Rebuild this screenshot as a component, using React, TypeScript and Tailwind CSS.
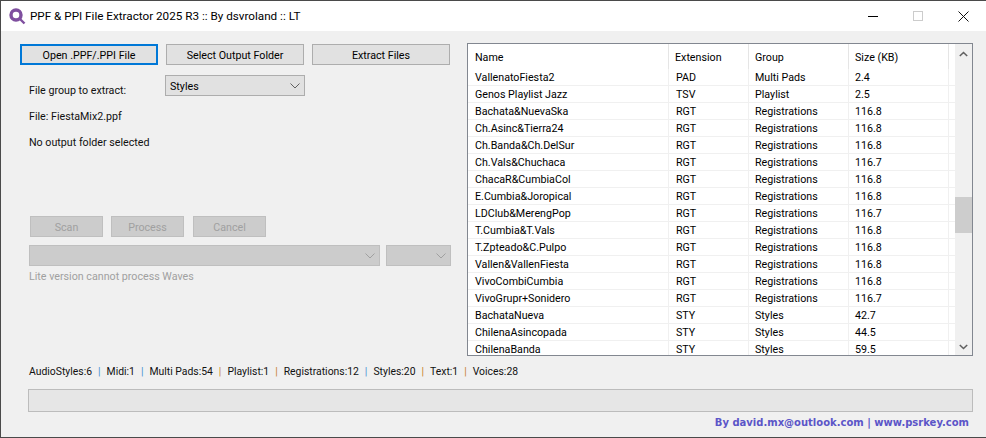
import React from "react";

const rows: [string, string, string, string][] = [
  ["VallenatoFiesta2", "PAD", "Multi Pads", "2.4"],
  ["Genos Playlist Jazz", "TSV", "Playlist", "2.5"],
  ["Bachata&NuevaSka", "RGT", "Registrations", "116.8"],
  ["Ch.Asinc&Tierra24", "RGT", "Registrations", "116.8"],
  ["Ch.Banda&Ch.DelSur", "RGT", "Registrations", "116.8"],
  ["Ch.Vals&Chuchaca", "RGT", "Registrations", "116.7"],
  ["ChacaR&CumbiaCol", "RGT", "Registrations", "116.8"],
  ["E.Cumbia&Joropical", "RGT", "Registrations", "116.8"],
  ["LDClub&MerengPop", "RGT", "Registrations", "116.7"],
  ["T.Cumbia&T.Vals", "RGT", "Registrations", "116.8"],
  ["T.Zpteado&C.Pulpo", "RGT", "Registrations", "116.8"],
  ["Vallen&VallenFiesta", "RGT", "Registrations", "116.8"],
  ["VivoCombiCumbia", "RGT", "Registrations", "116.8"],
  ["VivoGrupr+Sonidero", "RGT", "Registrations", "116.7"],
  ["BachataNueva", "STY", "Styles", "42.7"],
  ["ChilenaAsincopada", "STY", "Styles", "44.5"],
  ["ChilenaBanda", "STY", "Styles", "59.5"],
];

const status = ["AudioStyles:6", "Midi:1", "Multi Pads:54", "Playlist:1", "Registrations:12", "Styles:20", "Text:1", "Voices:28"];
const blueBars = [1, 2, 5];

function Chevron({ color = "#606060" }: { color?: string }) {
  return (
    <svg width="10" height="6" viewBox="0 0 10 6" fill="none" stroke={color} strokeWidth="1">
      <path d="M0.5 0.5 L5 5 L9.5 0.5" />
    </svg>
  );
}

function Btn({ children }: { children: React.ReactNode }) {
  return (
    <div className="w-[138px] h-[21px] pt-[2px] flex items-center justify-center bg-[#e1e1e1] border border-[#adadad] text-black">
      {children}
    </div>
  );
}

function DisabledBtn({ children }: { children: React.ReactNode }) {
  return (
    <div className="w-[73px] h-[21px] pt-[2px] flex items-center justify-center bg-[#cccccc] border border-[#bfbfbf] text-[#a0a0a0]">
      {children}
    </div>
  );
}

export default function App() {
  return (
    <div className="w-[986px] h-[438px] flex flex-col overflow-hidden bg-[#f0f0f0] border-t border-l border-b border-[#4a4a4a] text-[10.7px] leading-[16px] text-[#111] font-['Roboto','Noto_Sans',sans-serif]">
      {/* title bar */}
      <div className="h-[30px] shrink-0 bg-white flex items-center">
        <svg className="ml-[8px] mt-[1px] shrink-0" width="17" height="17" viewBox="0 0 17 17" fill="none">
          <circle cx="7" cy="7" r="5" stroke="#7f4f9f" strokeWidth="3.4" />
          <path d="M10 10 L15.5 15.5" stroke="#7f4f9f" strokeWidth="2.4" />
        </svg>
        <span className="ml-[4px] text-black text-[11.7px]">PPF &amp; PPI File Extractor 2025 R3 :: By dsvroland :: LT</span>
        <div className="ml-auto flex items-center">
          <div className="w-[45px] h-[30px] flex items-center justify-center">
            <div className="w-[10px] h-px bg-black" />
          </div>
          <div className="w-[45px] h-[30px] flex items-center justify-center">
            <div className="w-[10px] h-[10px] border border-[#cccccc]" />
          </div>
          <div className="w-[46px] h-[30px] flex items-center justify-center">
            <svg width="11" height="11" viewBox="0 0 11 11" stroke="#111" strokeWidth="1">
              <path d="M0.5 0.5 L10.5 10.5 M10.5 0.5 L0.5 10.5" />
            </svg>
          </div>
        </div>
      </div>

      {/* body */}
      <div className="flex-1 flex flex-col">
        <div className="flex h-[313px] mt-[12px] shrink-0">
          {/* left column */}
          <div className="w-[466px] shrink-0 pl-[19px] pt-px flex flex-col">
            <div className="flex gap-[8px]">
              <div className="w-[138px] h-[21px] pt-[2px] flex items-center justify-center bg-[#e1e1e1] border-2 border-[#0078d7] text-black">
                Open .PPF/.PPI File
              </div>
              <Btn>Select Output Folder</Btn>
              <Btn>Extract Files</Btn>
            </div>
            <div className="flex mt-[10px] ml-[9px]">
              <span className="w-[136px] mt-[8px]">File group to extract:</span>
              <div className="w-[140px] h-[21px] flex items-center justify-between pl-[4px] pr-[4px] bg-[#e1e1e1] border border-[#adadad] text-black">
                <span className="mt-[2px]">Styles</span>
                <Chevron />
              </div>
            </div>
            <div className="ml-[9px] mt-[10px]">File: FiestaMix2.ppf</div>
            <div className="ml-[9px] mt-[10px]">No output folder selected</div>

            <div className="flex ml-[10px] mt-[65px]">
              <DisabledBtn>Scan</DisabledBtn>
              <div className="ml-[8px]"><DisabledBtn>Process</DisabledBtn></div>
              <div className="ml-[9px]"><DisabledBtn>Cancel</DisabledBtn></div>
            </div>
            <div className="flex ml-[9px] mt-[8px] gap-[6px]">
              <div className="w-[351px] h-[21px] flex items-center justify-end pr-[4px] bg-[#cccccc] border border-[#bfbfbf]">
                <Chevron color="#a0a0a0" />
              </div>
              <div className="w-[65px] h-[21px] flex items-center justify-end pr-[4px] bg-[#cccccc] border border-[#bfbfbf]">
                <Chevron color="#a0a0a0" />
              </div>
            </div>
            <div className="ml-[9px] mt-[3px] text-[#a0a0a0]">Lite version cannot process Waves</div>
          </div>

          {/* list */}
          <div className="w-[506px] h-[313px] shrink-0 bg-white border border-[#828790] flex overflow-hidden">
            <div className="w-[487px] shrink-0 overflow-hidden">
              <div className="h-[25px] flex text-black">
                <div className="w-[201px] pl-[7px] pt-[6px] border-r border-[#e5e5e5]">Name</div>
                <div className="w-[80px] pl-[6px] pt-[6px] border-r border-[#e5e5e5]">Extension</div>
                <div className="w-[100px] pl-[6px] pt-[6px] border-r border-[#e5e5e5]">Group</div>
                <div className="w-[100px] pl-[6px] pt-[6px] border-r border-[#e5e5e5]">Size (KB)</div>
              </div>
              {rows.map((r) => (
                <div key={r[0]} className="h-[17px] flex border-b border-[#f0f0f0] text-black">
                  <div className="w-[201px] pl-[7px] pt-px border-r border-[#f0f0f0]">{r[0]}</div>
                  <div className="w-[80px] pl-[7px] pt-px border-r border-[#f0f0f0]">{r[1]}</div>
                  <div className="w-[100px] pl-[6px] pt-px border-r border-[#f0f0f0]">{r[2]}</div>
                  <div className="w-[100px] pl-[6px] pt-px border-r border-[#f0f0f0]">{r[3]}</div>
                </div>
              ))}
            </div>
            <div className="flex-1 bg-[#f0f0f0] flex flex-col items-center">
              <div className="w-full h-[19px] flex items-center justify-center">
                <svg width="9" height="6" viewBox="0 0 9 6" fill="none" stroke="#606060" strokeWidth="1.6">
                  <path d="M0.8 5 L4.5 1.5 L8.2 5" />
                </svg>
              </div>
              <div className="w-full h-[36px] bg-[#cdcdcd] mt-[134px]" />
              <div className="w-full h-[17px] mt-auto flex items-center justify-center">
                <svg width="9" height="6" viewBox="0 0 9 6" fill="none" stroke="#606060" strokeWidth="1.6">
                  <path d="M0.8 1 L4.5 4.5 L8.2 1" />
                </svg>
              </div>
            </div>
          </div>
        </div>

        {/* status line */}
        <div className="ml-[28px] mt-[8px] flex items-center h-[16px] whitespace-pre text-[10.4px] text-[#111]">
          {status.map((s, i) => (
            <React.Fragment key={s}>
              {i > 0 && (
                <span className={`mx-[6px] ${blueBars.includes(i) ? "text-[#4a8fd0]" : "text-[#c87f2e]"}`}>|</span>
              )}
              <span>{s}</span>
            </React.Fragment>
          ))}
        </div>

        <div className="ml-[27px] mt-[9px] w-[945px] h-[23px] shrink-0 bg-[#e6e6e6] border border-[#bcbcbc]" />

        <div className="mt-[3px] pr-[17px] text-right font-bold text-[10px] text-[#5b55c8] font-['DejaVu_Sans',sans-serif]">
          By david.mx@outlook.com | www.psrkey.com
        </div>
      </div>
    </div>
  );
}
